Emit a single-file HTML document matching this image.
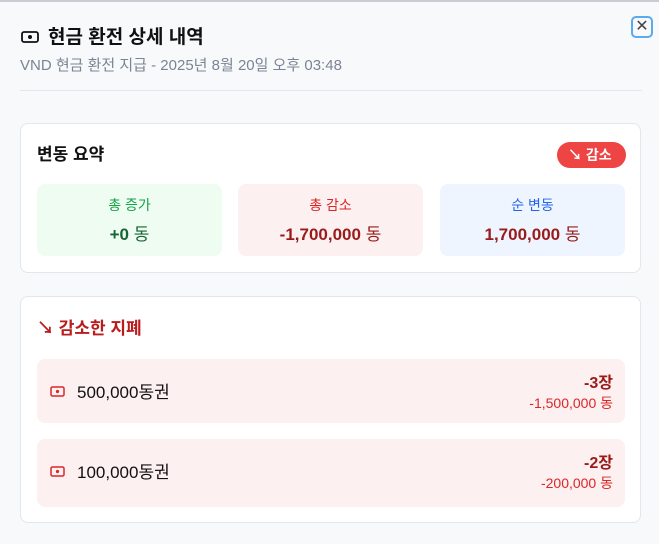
<!DOCTYPE html>
<html><head><meta charset="utf-8"><style>
*{box-sizing:border-box;margin:0;padding:0}
body{width:659px;height:544px;background:#f8f9fb;font-family:"Liberation Sans","Noto Sans CJK KR",sans-serif;position:relative;overflow:hidden;border-top:2px solid #c9ccd2}
.abs{position:absolute}
.card{position:absolute;left:20px;width:621px;background:#fff;border:1px solid #e3e6ea;border-radius:8px}
.box{position:absolute;top:60px;height:72px;width:185px;border-radius:8px;text-align:center}
.box .l{font-size:14px;margin-top:11px}
.box .v{font-size:17px;font-weight:bold;margin-top:5px}
.box .v span{font-weight:normal}
.row{position:absolute;left:16px;width:588px;background:#fdf0f0;border-radius:8px}
</style></head><body>
<svg class="abs" style="left:21px;top:28px" width="18" height="14" viewBox="0 0 18 14"><rect x="1" y="2" width="16" height="10" rx="2" fill="none" stroke="#111" stroke-width="1.8"/><circle cx="9" cy="7" r="2" fill="#111"/></svg>
<div class="abs" style="left:48px;top:20px;font-size:19px;font-weight:bold;color:#111">현금 환전 상세 내역</div>
<div class="abs" style="left:20px;top:52px;font-size:15px;color:#7b8494">VND 현금 환전 지급 - 2025년 8월 20일 오후 03:48</div>
<div class="abs" style="left:631px;top:14px;width:22px;height:22px;border:2px solid #5aaaf0;border-radius:5px;color:#444;font-size:16px;line-height:17px;text-align:center">✕</div>
<div class="abs" style="left:20px;top:88px;width:622px;height:1px;background:#e3e6ea"></div>

<div class="card" style="top:121px;height:150px">
 <div class="abs" style="left:16px;top:16px;font-size:17px;font-weight:bold;color:#111">변동 요약</div>
 <div class="abs" style="left:536px;top:18px;width:69px;height:26px;border-radius:13px;background:#ef4444;color:#fff;font-size:14px;font-weight:bold;line-height:26px;padding-left:11px">↘ 감소</div>
 <div class="box" style="left:16px;background:#effcf2"><div class="l" style="color:#16a34a">총 증가</div><div class="v" style="color:#166534">+0 <span style="color:#166534">동</span></div></div>
 <div class="box" style="left:217px;background:#fdf0f0"><div class="l" style="color:#dc2626">총 감소</div><div class="v" style="color:#991b1b">-1,700,000 <span>동</span></div></div>
 <div class="box" style="left:419px;background:#eef5ff"><div class="l" style="color:#2563eb">순 변동</div><div class="v" style="color:#991b1b">1,700,000 <span>동</span></div></div>
</div>

<div class="card" style="top:294px;height:227px">
 <div class="abs" style="left:16px;top:17px;font-size:17px;font-weight:bold;color:#b91c1c">↘ 감소한 지폐</div>
 <div class="row" style="top:62px;height:64px">
  <svg class="abs" style="left:13px;top:27px" width="15" height="11" viewBox="0 0 15 11"><rect x="1" y="1" width="13" height="9" rx="1.5" fill="none" stroke="#dc2626" stroke-width="1.5"/><circle cx="7.5" cy="5.5" r="1.6" fill="#dc2626"/></svg>
  <div class="abs" style="left:40px;top:19px;font-size:17px;color:#111">500,000동권</div>
  <div class="abs" style="right:12px;top:10px;font-size:16px;font-weight:bold;color:#991b1b">-3장</div>
  <div class="abs" style="right:12px;top:34px;font-size:14px;color:#dc2626">-1,500,000 동</div>
 </div>
 <div class="row" style="top:142px;height:68px">
  <svg class="abs" style="left:13px;top:27px" width="15" height="11" viewBox="0 0 15 11"><rect x="1" y="1" width="13" height="9" rx="1.5" fill="none" stroke="#dc2626" stroke-width="1.5"/><circle cx="7.5" cy="5.5" r="1.6" fill="#dc2626"/></svg>
  <div class="abs" style="left:40px;top:19px;font-size:17px;color:#111">100,000동권</div>
  <div class="abs" style="right:12px;top:10px;font-size:16px;font-weight:bold;color:#991b1b">-2장</div>
  <div class="abs" style="right:12px;top:34px;font-size:14px;color:#dc2626">-200,000 동</div>
 </div>
</div>
</body></html>
